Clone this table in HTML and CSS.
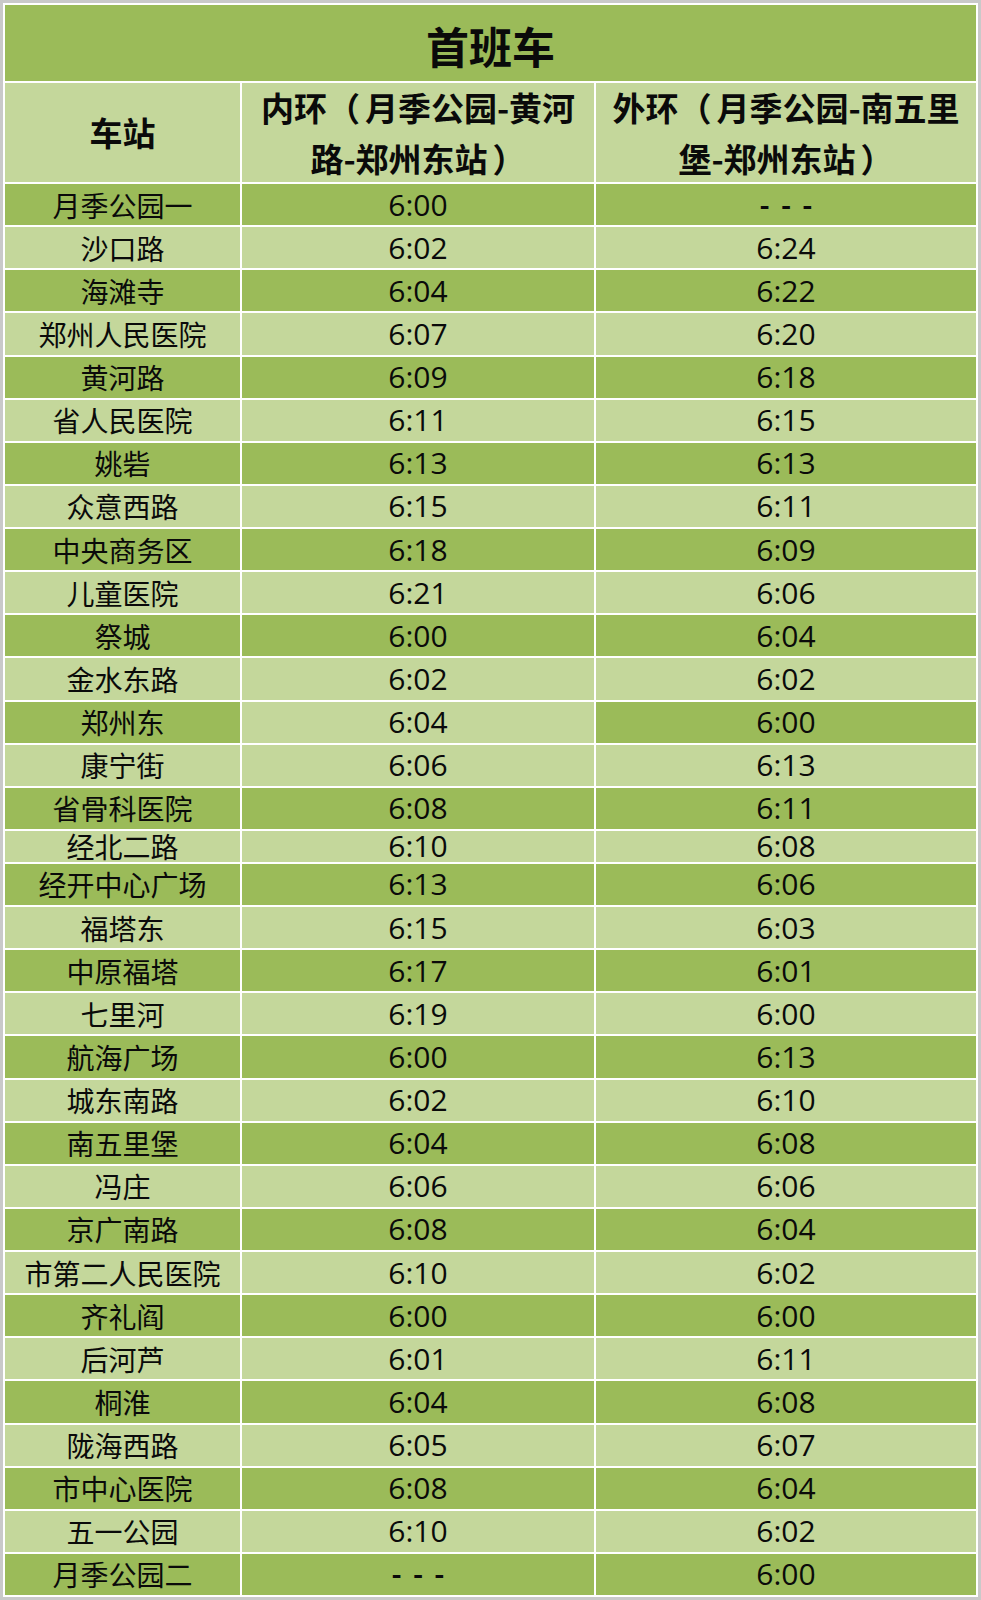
FILE: index.html
```html
<!DOCTYPE html>
<html lang="zh-CN">
<head>
<meta charset="utf-8">
<title>首班车</title>
<link rel="stylesheet" href="styles.css">
</head>
<body>
<div class="sheet">
  <div class="title d">首班车</div>
  <div class="head l"><div class="ht">车站</div></div>
  <div class="head l"><div class="ht">内环<span class="po">（</span>月季公园-黄河<br>路-郑州东站<span class="pc">）</span></div></div>
  <div class="head l"><div class="ht">外环<span class="po">（</span>月季公园-南五里<br>堡-郑州东站<span class="pc">）</span></div></div>

  <div class="c st d">月季公园一</div><div class="c tm d">6:00</div><div class="c tm d dash">- - -</div>
  <div class="c st l">沙口路</div><div class="c tm l">6:02</div><div class="c tm l">6:24</div>
  <div class="c st d">海滩寺</div><div class="c tm d">6:04</div><div class="c tm d">6:22</div>
  <div class="c st l">郑州人民医院</div><div class="c tm l">6:07</div><div class="c tm l">6:20</div>
  <div class="c st d">黄河路</div><div class="c tm d">6:09</div><div class="c tm d">6:18</div>
  <div class="c st l">省人民医院</div><div class="c tm l">6:11</div><div class="c tm l">6:15</div>
  <div class="c st d">姚砦</div><div class="c tm d">6:13</div><div class="c tm d">6:13</div>
  <div class="c st l">众意西路</div><div class="c tm l">6:15</div><div class="c tm l">6:11</div>
  <div class="c st d">中央商务区</div><div class="c tm d">6:18</div><div class="c tm d">6:09</div>
  <div class="c st l">儿童医院</div><div class="c tm l">6:21</div><div class="c tm l">6:06</div>
  <div class="c st d">祭城</div><div class="c tm d">6:00</div><div class="c tm d">6:04</div>
  <div class="c st l">金水东路</div><div class="c tm l">6:02</div><div class="c tm l">6:02</div>
  <div class="c st d">郑州东</div><div class="c tm l">6:04</div><div class="c tm d">6:00</div>
  <div class="c st l">康宁街</div><div class="c tm l">6:06</div><div class="c tm l">6:13</div>
  <div class="c st d">省骨科医院</div><div class="c tm d">6:08</div><div class="c tm d">6:11</div>
  <div class="c short st l">经北二路</div><div class="c short tm l">6:10</div><div class="c short tm l">6:08</div>
  <div class="c st d">经开中心广场</div><div class="c tm d">6:13</div><div class="c tm d">6:06</div>
  <div class="c st l">福塔东</div><div class="c tm l">6:15</div><div class="c tm l">6:03</div>
  <div class="c st d">中原福塔</div><div class="c tm d">6:17</div><div class="c tm d">6:01</div>
  <div class="c st l">七里河</div><div class="c tm l">6:19</div><div class="c tm l">6:00</div>
  <div class="c st d">航海广场</div><div class="c tm d">6:00</div><div class="c tm d">6:13</div>
  <div class="c st l">城东南路</div><div class="c tm l">6:02</div><div class="c tm l">6:10</div>
  <div class="c st d">南五里堡</div><div class="c tm d">6:04</div><div class="c tm d">6:08</div>
  <div class="c st l">冯庄</div><div class="c tm l">6:06</div><div class="c tm l">6:06</div>
  <div class="c st d">京广南路</div><div class="c tm d">6:08</div><div class="c tm d">6:04</div>
  <div class="c st l">市第二人民医院</div><div class="c tm l">6:10</div><div class="c tm l">6:02</div>
  <div class="c st d">齐礼阎</div><div class="c tm d">6:00</div><div class="c tm d">6:00</div>
  <div class="c st l">后河芦</div><div class="c tm l">6:01</div><div class="c tm l">6:11</div>
  <div class="c st d">桐淮</div><div class="c tm d">6:04</div><div class="c tm d">6:08</div>
  <div class="c st l">陇海西路</div><div class="c tm l">6:05</div><div class="c tm l">6:07</div>
  <div class="c st d">市中心医院</div><div class="c tm d">6:08</div><div class="c tm d">6:04</div>
  <div class="c st l">五一公园</div><div class="c tm l">6:10</div><div class="c tm l">6:02</div>
  <div class="c st d">月季公园二</div><div class="c tm d dash">- - -</div><div class="c tm d">6:00</div>
</div>
</body>
</html>
```

FILE: styles.css
```css
html, body {
  margin: 0;
  padding: 0;
  background: #c9c9c9;
}

body {
  padding: 3px;
  font-family: "Noto Sans CJK SC", "Open Sans", sans-serif;
  color: #0a0a0a;
}

.sheet {
  display: grid;
  grid-template-columns: 235px 352px 380px;
  gap: 2px;
  padding: 2px;
  background: #ffffff;
  width: max-content;
}

.d { background: #9bbb59; }
.l { background: #c4d79b; }

.title {
  grid-column: 1 / 4;
  height: 76px;
  display: flex;
  align-items: center;
  justify-content: center;
  font-size: 43px;
  font-weight: 700;
  padding-top: 4px;
  box-sizing: border-box;
}

.head {
  height: 99px;
  display: flex;
  align-items: center;
  justify-content: center;
  text-align: center;
  font-size: 33px;
  font-weight: 700;
  line-height: 51px;
}

.ht {
  white-space: nowrap;
}

.head .po {
  margin-right: 5px;
}

.head .pc {
  margin-left: 5px;
}

.c {
  height: 41.125px;
  display: flex;
  align-items: center;
  justify-content: center;
  line-height: 1;
}

.c.short {
  height: 31px;
}

.st {
  font-size: 28px;
  font-family: "Noto Sans CJK SC", sans-serif;
}

.tm {
  font-size: 30px;
  font-family: "Open Sans", "Noto Sans CJK SC", sans-serif;
}

.dash {
  word-spacing: 4px;
  font-weight: 600;
}
```
